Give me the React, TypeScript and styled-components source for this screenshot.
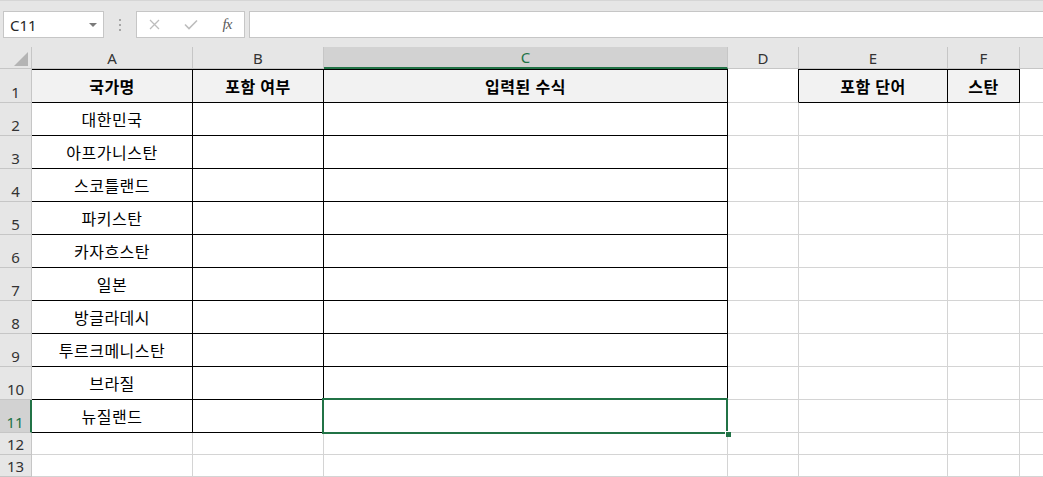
import { createGlobalStyle, styled } from "styled-components";

const GlobalStyle = createGlobalStyle`
  html, body {
    margin: 0;
    padding: 0;
    background: #ffffff;
    overflow: hidden;
  }
  body {
    font-family: "Noto Sans", "Noto Sans CJK KR", sans-serif;
    color: #000;
  }
`;

const GREEN = "#217346";
const GRID = "#d4d4d4";
const HEAD_LINE = "#c6c6c6";

const Page = styled.div`
  width: 1043px;
  height: 477px;
  display: flex;
  flex-direction: column;
  overflow: hidden;
`;

const FormulaBar = styled.div`
  height: 48px;
  box-sizing: border-box;
  background: #e6e6e6;
  border-top: 1px solid #d6d6d6;
  padding: 10px 0 0 3px;
  display: flex;
  align-items: flex-start;
`;

const NameBox = styled.div`
  width: 101px;
  height: 27px;
  box-sizing: border-box;
  background: #fff;
  border: 1px solid ${HEAD_LINE};
  display: flex;
  align-items: center;
  justify-content: space-between;
  padding: 0 6px 0 6px;
  font-size: 15px;
  color: #262626;
`;

const DropArrow = styled.span`
  width: 0;
  height: 0;
  border-left: 4px solid transparent;
  border-right: 4px solid transparent;
  border-top: 4px solid #7a7a7a;
`;

const Grip = styled.div`
  width: 32px;
  height: 27px;
  display: flex;
  flex-direction: column;
  align-items: center;
  justify-content: center;
  gap: 3px;
  span {
    width: 2px;
    height: 2px;
    background: #a6a6a6;
  }
`;

const FxBox = styled.div`
  width: 109px;
  height: 27px;
  box-sizing: border-box;
  background: #fff;
  border: 1px solid ${HEAD_LINE};
  display: flex;
  align-items: center;
  padding-left: 11px;
`;

const FxSlot = styled.div<{ $w: number }>`
  width: ${(p) => p.$w}px;
  display: flex;
  align-items: center;
  justify-content: center;
`;

const FxText = styled.span`
  font-family: "Liberation Serif", serif;
  font-style: italic;
  font-size: 15px;
  color: #5a5a5a;
  letter-spacing: -1px;
`;

const FormulaInput = styled.div`
  flex: 1;
  margin-left: 4px;
  height: 27px;
  box-sizing: border-box;
  background: #fff;
  border: 1px solid ${HEAD_LINE};
  border-right: none;
`;

const Sheet = styled.div`
  display: flex;
  flex-direction: column;
`;

const Row = styled.div<{ $h: number }>`
  display: grid;
  grid-template-columns: 32px 161px 131px 404px 71px 149px 72px 72px;
  height: ${(p) => p.$h}px;
`;

const Corner = styled.div`
  box-sizing: border-box;
  background: #e6e6e6;
  border-right: 1px solid ${HEAD_LINE};
  border-bottom: 1px solid ${HEAD_LINE};
  display: flex;
  align-items: flex-end;
  justify-content: flex-end;
  padding: 0 3px 2px 0;
`;

const ColHead = styled.div<{ $sel?: boolean }>`
  box-sizing: border-box;
  background: ${(p) => (p.$sel ? "#d2d2d2" : "#e6e6e6")};
  border-right: 1px solid ${HEAD_LINE};
  border-bottom: ${(p) => (p.$sel ? `2px solid ${GREEN}` : `1px solid ${HEAD_LINE}`)};
  color: ${(p) => (p.$sel ? GREEN : "#333")};
  font-size: 15px;
  display: flex;
  align-items: center;
  justify-content: center;
`;

const RowHead = styled.div<{ $sel?: boolean }>`
  box-sizing: border-box;
  background: ${(p) => (p.$sel ? "#d2d2d2" : "#e6e6e6")};
  border-right: ${(p) => (p.$sel ? `2px solid ${GREEN}` : `1px solid ${HEAD_LINE}`)};
  border-bottom: 1px solid ${HEAD_LINE};
  color: ${(p) => (p.$sel ? GREEN : "#333")};
  font-size: 15px;
  display: flex;
  align-items: flex-end;
  justify-content: center;
`;

const Cell = styled.div<{ $head?: boolean; $right: string; $bottom: string; $top?: boolean }>`
  box-sizing: border-box;
  position: relative;
  background: ${(p) => (p.$head ? "#f2f2f2" : "#fff")};
  border-right: 1px solid ${(p) => p.$right};
  border-bottom: 1px solid ${(p) => p.$bottom};
  border-top: ${(p) => (p.$top ? "1px solid #000" : "none")};
  font-size: 16px;
  letter-spacing: 0.5px;
  font-weight: ${(p) => (p.$head ? 700 : 400)};
  color: #000;
  display: flex;
  align-items: center;
  justify-content: center;
  white-space: nowrap;
`;

const Selection = styled.div`
  position: absolute;
  top: -2px;
  left: -2px;
  right: -1px;
  bottom: -2px;
  border: 2px solid ${GREEN};
  z-index: 2;
  pointer-events: none;
`;

const FillHandle = styled.span`
  position: absolute;
  right: -5px;
  bottom: -5px;
  width: 5px;
  height: 5px;
  background: ${GREEN};
  border: 1px solid #fff;
  border-right: none;
  border-bottom: none;
`;

const COLS = ["A", "B", "C", "D", "E", "F", "G"];
// G is only partly on screen, its letter sits past the window edge
const VISIBLE_LABEL = (c: string) => (c === "G" ? "" : c);

const DATA: Record<string, string> = {
  A1: "국가명",
  B1: "포함 여부",
  C1: "입력된 수식",
  E1: "포함 단어",
  F1: "스탄",
  A2: "대한민국",
  A3: "아프가니스탄",
  A4: "스코틀랜드",
  A5: "파키스탄",
  A6: "카자흐스탄",
  A7: "일본",
  A8: "방글라데시",
  A9: "투르크메니스탄",
  A10: "브라질",
  A11: "뉴질랜드",
};

const inTable = (r: number, c: number) =>
  (r >= 1 && r <= 11 && c >= 0 && c <= 2) || (r === 1 && (c === 4 || c === 5));

const rowHeight = (r: number) => (r === 1 ? 34 : r <= 11 ? 33 : 22);

export default function App() {
  const rows = Array.from({ length: 13 }, (_, i) => i + 1);
  return (
    <Page>
      <GlobalStyle />
      <FormulaBar>
        <NameBox>
          <span>C11</span>
          <DropArrow />
        </NameBox>
        <Grip>
          <span />
          <span />
          <span />
        </Grip>
        <FxBox>
          <FxSlot $w={12}>
            <svg width="11" height="11" viewBox="0 0 11 11">
              <path d="M1 1L10 10M10 1L1 10" stroke="#bdbdbd" strokeWidth="1.3" fill="none" />
            </svg>
          </FxSlot>
          <FxSlot $w={62}>
            <svg width="14" height="11" viewBox="0 0 14 11">
              <path d="M1 5.5L5 9.5L13 1.5" stroke="#bdbdbd" strokeWidth="1.6" fill="none" />
            </svg>
          </FxSlot>
          <FxSlot $w={10}>
            <FxText>fx</FxText>
          </FxSlot>
        </FxBox>
        <FormulaInput />
      </FormulaBar>
      <Sheet>
        <Row $h={22}>
          <Corner>
            <svg width="14" height="14" viewBox="0 0 14 14">
              <path d="M14 0L14 14L0 14Z" fill="#b4b4b4" />
            </svg>
          </Corner>
          {COLS.map((c) => (
            <ColHead key={c} $sel={c === "C"}>
              {VISIBLE_LABEL(c)}
            </ColHead>
          ))}
        </Row>
        {rows.map((r) => (
          <Row key={r} $h={rowHeight(r)}>
            <RowHead $sel={r === 11}>{r}</RowHead>
            {COLS.map((c, ci) => {
              const id = `${c}${r}`;
              const own = inTable(r, ci);
              const right = own || inTable(r, ci + 1) ? "#000" : GRID;
              const bottom = own || inTable(r + 1, ci) ? "#000" : GRID;
              return (
                <Cell
                  key={id}
                  $head={r === 1 && own}
                  $right={right}
                  $bottom={bottom}
                  $top={r === 1 && own}
                >
                  {DATA[id]}
                  {id === "C11" && (
                    <Selection>
                      <FillHandle />
                    </Selection>
                  )}
                </Cell>
              );
            })}
          </Row>
        ))}
      </Sheet>
    </Page>
  );
}
